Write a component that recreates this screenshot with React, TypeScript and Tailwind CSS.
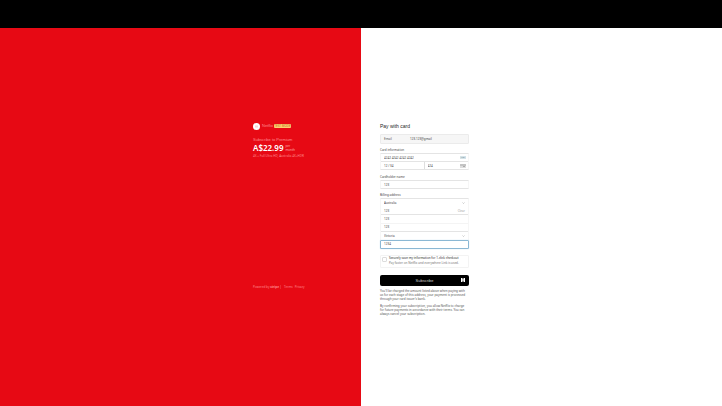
import React from "react";

const field =
  "block h-full w-full min-w-0 appearance-none bg-transparent pl-[3px] text-[3px] leading-[8px] text-neutral-700 outline-none";

const box = "rounded-[1px] border border-x-[#f6f6f6] border-y-[#e4e4e4]";

function Label({ htmlFor, children }: { htmlFor: string; children: React.ReactNode }) {
  return (
    <label htmlFor={htmlFor} className="block h-[5px] text-[3px] leading-[4px] text-neutral-700">
      {children}
    </label>
  );
}

function Chevron() {
  return (
    <svg viewBox="0 0 6 4" className="mr-[3px] h-[2px] w-[3px] shrink-0" fill="none" stroke="#999">
      <path d="M1 1l2 2 2-2" />
    </svg>
  );
}

function Summary() {
  return (
    <section className="flex w-1/2 justify-end bg-[#e70914] pt-[95px]">
      <div className="mr-[19px] flex h-[167px] w-[89px] flex-col text-[#ff8a8f]">
        <header className="flex h-[6px] items-center">
          <svg viewBox="0 0 14 14" className="h-[7px] w-[7px] shrink-0">
            <circle cx="7" cy="7" r="7" fill="#fff" />
            <path d="M4 6h6M4 8h6" stroke="#f0a0a4" strokeWidth="1" />
          </svg>
          <span className="ml-[2px] w-[12px] font-['Liberation_Sans',sans-serif] text-[4px] leading-[6px]">Netflix</span>
          <span className="h-[4px] w-[17px] rounded-[1px] bg-[#ffcf70] text-center text-[3px] leading-[4px] text-[#c06a20]">
            TEST MODE
          </span>
        </header>
        <h1 className="mt-[8px] font-['Liberation_Sans',sans-serif] text-[4px] leading-[5px]">
          Subscribe to Premium
        </h1>
        <div className="flex h-[12px] items-center gap-[2px]">
          <strong className="text-[8px] leading-[12px] font-semibold text-white">A$22.99</strong>
          <span className="text-[3px] leading-[4px] text-[#ffb0b3]">
            per
            <br />
            month
          </span>
        </div>
        <p className="text-[3px] leading-[5px] whitespace-nowrap">
          4K + Full Ultra HD, Australia 4K+HDR
        </p>
        <footer className="mt-auto flex h-[6px] items-center text-[3px] leading-[4px] whitespace-nowrap">
          <a href="#stripe" className="w-[27px]">
            Powered by <b>stripe</b>
          </a>
          <span className="h-[4px] w-px bg-[#ea2a32]" />
          <a href="#terms" className="ml-[3px]">Terms</a>
          <a href="#privacy" className="ml-[2px]">Privacy</a>
        </footer>
      </div>
    </section>
  );
}

function Payment() {
  return (
    <section className="flex w-1/2 bg-white pt-[95px]">
      <form className="ml-[19px] w-[89px]" onSubmit={(e) => e.preventDefault()}>
        <h2 className="font-['Liberation_Sans',sans-serif] text-[5px] leading-[7px] text-neutral-800">
          Pay with card
        </h2>

        <div className="mt-[4px] flex h-[10px] items-center rounded-[1px] border border-[#ebebeb] bg-[#f6f6f6] pl-[3px] text-[3px] leading-[4px] text-neutral-600">
          <span className="w-[26px]">Email</span>
          <span className="text-neutral-700">123.123@gmail</span>
        </div>

        <div className="mt-[4px]">
          <Label htmlFor="card">Card information</Label>
          <div className={`${box} h-[17px]`}>
            <div className="flex h-[8px] items-center border-b border-[#e4e4e4]">
              <input id="card" className={field} defaultValue="4242 4242 4242 4242" />
              <span className="mr-[2px] h-[3px] w-[6px] shrink-0 bg-[#d5e3e8] text-center text-[2px] leading-[3px] text-[#52717c]">
                VISA
              </span>
            </div>
            <div className="grid h-[7px] grid-cols-2">
              <div className="border-r border-[#dedede]">
                <input aria-label="Expiry" className={field} defaultValue="12 / 34" />
              </div>
              <div className="flex items-center">
                <input aria-label="CVC" className={field} defaultValue="424" />
                <svg viewBox="0 0 12 8" className="mr-[2px] h-[4px] w-[6px] shrink-0">
                  <rect width="12" height="8" rx="1" fill="#ddd" />
                  <path d="M0 2h12M6 5h4" stroke="#777" />
                </svg>
              </div>
            </div>
          </div>
        </div>

        <div className="mt-[5px]">
          <Label htmlFor="holder">Cardholder name</Label>
          <div className={`${box} h-[9px]`}>
            <input id="holder" className={field} defaultValue="123" />
          </div>
        </div>

        <div className="mt-[4px]">
          <Label htmlFor="country">Billing address</Label>
          <div className={`${box} grid h-[51px] grid-rows-6`}>
            <div className="flex items-center">
              <select id="country" className={field}>
                <option>Australia</option>
              </select>
              <Chevron />
            </div>
            <div className="flex items-center border-b border-[#e4e4e4]">
              <input aria-label="Address line 1" className={field} defaultValue="123" />
              <button type="button" className="mr-[3px] text-[3px] leading-[4px] text-neutral-400">Clear</button>
            </div>
            <div className="border-b border-[#f4f4f4]">
              <input aria-label="Address line 2" className={field} defaultValue="123" />
            </div>
            <div className="border-b border-[#e4e4e4]">
              <input aria-label="Suburb" className={field} defaultValue="123" />
            </div>
            <div className="flex items-center">
              <select aria-label="State" className={field}>
                <option>Victoria</option>
              </select>
              <Chevron />
            </div>
            <div className="-mx-px -mb-px rounded-[1px] border border-[#8bb8d4] shadow-[0_0_1px_#9cc9e4]">
              <input aria-label="Postcode" className={field} defaultValue="1234" />
            </div>
          </div>
        </div>

        <div className="mt-[6px] flex h-[13px] items-start rounded-[1px] border border-[#f3f3f3] pl-px">
          <input
            id="save"
            type="checkbox"
            className="mt-px h-[5px] w-[5px] shrink-0 appearance-none rounded-[1px] border border-[#dcdcdc]"
          />
          <label htmlFor="save" className="ml-[2px] text-[3px] leading-[5px] whitespace-nowrap text-neutral-800">
            Securely save my information for 1-click checkout
            <span className="block text-neutral-500">Pay faster on Netflix and everywhere Link is used.</span>
          </label>
        </div>

        <button
          type="submit"
          className="relative mt-[7px] block h-[11px] w-full rounded-[2px] bg-black font-['Liberation_Sans',sans-serif] text-[4px] leading-[11px] text-neutral-300"
        >
          Subscribe
          <svg viewBox="0 0 8 8" className="absolute top-[3px] right-[4px] h-[4px] w-[4px]" fill="#fff">
            <path d="M0 0h3v3h2V0h3v8H5V5H3v3H0z" />
          </svg>
        </button>

        <div className="mt-[3px] flex flex-col gap-[3px] text-[3px] leading-[4px] whitespace-nowrap text-neutral-600">
          <p>
            You&apos;ll be charged the amount listed above when paying with
            <br />
            us for each stage of this address, your payment is processed
            <br />
            through your card issuer&apos;s bank.
          </p>
          <p>
            By confirming your subscription, you allow Netflix to charge
            <br />
            for future payments in accordance with their terms. You can
            <br />
            always cancel your subscription.
          </p>
        </div>
      </form>
    </section>
  );
}

export default function App() {
  return (
    <div className="flex min-h-screen flex-col font-['Noto_Sans',sans-serif]">
      <div className="h-[28px] bg-black" />
      <main className="flex grow">
        <Summary />
        <Payment />
      </main>
    </div>
  );
}
